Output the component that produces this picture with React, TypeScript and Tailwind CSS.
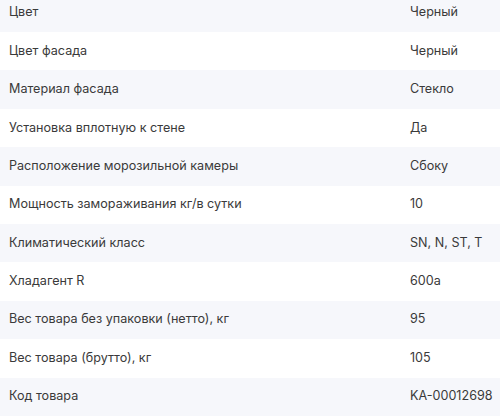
import React from "react";

const rows: [string, string][] = [
  ["Цвет", "Черный"],
  ["Цвет фасада", "Черный"],
  ["Материал фасада", "Стекло"],
  ["Установка вплотную к стене", "Да"],
  ["Расположение морозильной камеры", "Сбоку"],
  ["Мощность замораживания кг/в сутки", "10"],
  ["Климатический класс", "SN, N, ST, T"],
  ["Хладагент R", "600a"],
  ["Вес товара без упаковки (нетто), кг", "95"],
  ["Вес товара (брутто), кг", "105"],
  ["Код товара", "KA-00012698"],
];

export default function App() {
  return (
    <div className="w-[500px] h-[416px] overflow-hidden bg-white" style={{ fontFamily: "Inter, 'Noto Sans', sans-serif" }}>
      <div className="-mt-[6.4px] flex flex-col">
        {rows.map(([k, v], i) => (
          <div
            key={i}
            className={`flex items-center h-[38.4px] text-[12.6px] text-[#3a3a3a] ${i % 2 === 0 ? "bg-[#f6f7fb]" : "bg-white"}`}
          >
            <div className="pl-[9px] w-[410px] shrink-0">{k}</div>
            <div>{v}</div>
          </div>
        ))}
      </div>
    </div>
  );
}
